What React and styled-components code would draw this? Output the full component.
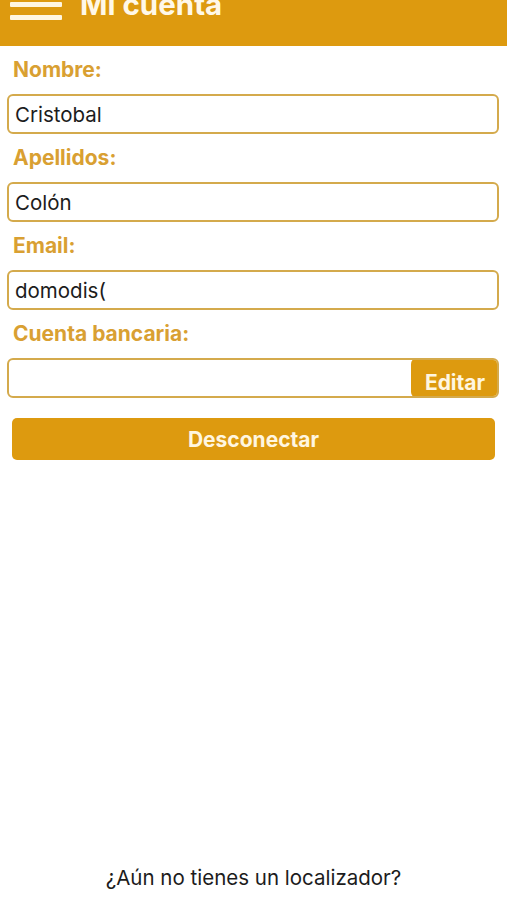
import styled, { createGlobalStyle } from "styled-components";

const GlobalStyles = createGlobalStyle`
  html, body {
    margin: 0;
    padding: 0;
    background: #ffffff;
    font-family: Inter, "Liberation Sans", sans-serif;
  }
`;

const Page = styled.div`
  width: 507px;
  height: 900px;
  overflow: hidden;
  display: flex;
  flex-direction: column;
`;

const Header = styled.header`
  background: #dd9a0f;
  height: 66px;
  margin-top: -20px;
  display: flex;
  align-items: flex-start;
  flex-shrink: 0;
`;

const Burger = styled.div`
  margin: 9px 0 0 10px;
  width: 52px;
  display: flex;
  flex-direction: column;
  gap: 8px;
`;

const BurgerLine = styled.span`
  display: block;
  height: 5px;
  background: #fff6e0;
  border-radius: 1px;
`;

const Title = styled.h1`
  margin: 0 0 0 18px;
  color: #fff8e8;
  font-size: 29.5px;
  font-weight: 700;
  line-height: 1;
  padding-top: 10px;
`;

const Form = styled.main`
  padding: 0 8px 0 7px;
  display: flex;
  flex-direction: column;
`;

const Label = styled.label`
  display: block;
  color: #d9a032;
  font-weight: 700;
  font-size: 21px;
  height: 48px;
  line-height: 48px;
  padding-left: 6px;
`;

const Field = styled.div`
  height: 40px;
  box-sizing: border-box;
  border: 2px solid #d4aa4c;
  border-radius: 6px;
  display: flex;
  align-items: center;
  justify-content: space-between;
  color: #1c1c1c;
  font-size: 20.5px;
  padding-left: 6px;
  overflow: hidden;
`;

const EditButton = styled.button`
  align-self: stretch;
  margin: -2px -2px -2px 0;
  width: 88px;
  border: none;
  border-radius: 6px;
  background: #dd9a0f;
  color: #fff6e0;
  font-family: inherit;
  font-weight: 700;
  font-size: 21px;
  padding: 8px 0 0;
`;

const Disconnect = styled.button`
  margin: 20px 4px 0 5px;
  height: 42px;
  border: none;
  border-radius: 5px;
  background: #dd9a0f;
  color: #fff6e0;
  font-family: inherit;
  font-weight: 700;
  font-size: 21px;
`;

const Spacer = styled.div`
  flex: 1;
`;

const Footer = styled.p`
  margin: 0 0 10px;
  text-align: center;
  font-size: 20.5px;
  color: #1c1c1c;
`;

const fields = [
  { label: "Nombre:", value: "Cristobal" },
  { label: "Apellidos:", value: "Colón" },
  { label: "Email:", value: "domodis(" },
];

export default function App() {
  return (
    <>
      <GlobalStyles />
      <Page>
        <Header>
          <Burger>
            <BurgerLine />
            <BurgerLine />
            <BurgerLine />
          </Burger>
          <Title>Mi cuenta</Title>
        </Header>
        <Form>
          {fields.map((f) => (
            <div key={f.label}>
              <Label>{f.label}</Label>
              <Field>{f.value}</Field>
            </div>
          ))}
          <Label>Cuenta bancaria:</Label>
          <Field>
            <span />
            <EditButton>Editar</EditButton>
          </Field>
          <Disconnect>Desconectar</Disconnect>
        </Form>
        <Spacer />
        <Footer>¿Aún no tienes un localizador?</Footer>
      </Page>
    </>
  );
}
